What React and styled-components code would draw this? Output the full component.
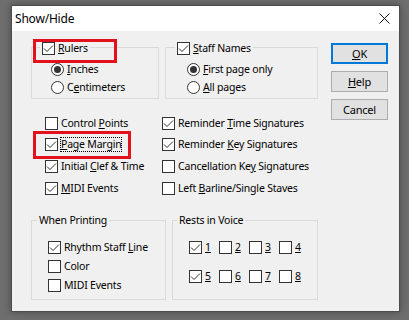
import React from 'react';
import styled, { createGlobalStyle } from 'styled-components';

const GlobalStyle = createGlobalStyle`
  html, body {
    margin: 0;
    padding: 0;
    background: #6e6e6e;
  }
  body {
    font-family: "Noto Sans", sans-serif;
    font-size: 10.5px;
    letter-spacing: -0.2px;
    color: #000;
  }
`;

const Screen = styled.div`
  width: 409px;
  height: 320px;
  box-sizing: border-box;
  padding: 5px 0 0 11px;
  overflow: hidden;
`;

const Dialog = styled.div`
  position: relative;
  width: 389px;
  height: 307px;
  box-sizing: border-box;
  border: 1px solid #4c4c4c;
  background: #f0f0f0;
  box-shadow: 0 0 7px rgba(0, 0, 0, 0.35);
  display: flex;
  flex-direction: column;
`;

const TitleBar = styled.div`
  height: 25px;
  flex: none;
  background: #fff;
  display: flex;
  align-items: center;
  justify-content: space-between;
  padding: 0 9px 0 3px;
  font-size: 12px;
`;

const Body = styled.div`
  display: flex;
  padding-left: 19px;
`;

const MainColumn = styled.div`
  width: 287px;
  padding-top: 16px;
`;

const ButtonColumn = styled.div`
  width: 57px;
  margin-left: 13px;
  padding-top: 12px;
  display: flex;
  flex-direction: column;
  gap: 7px;
`;

const Button = styled.button`
  width: 57px;
  height: 21px;
  box-sizing: border-box;
  padding: 0;
  background: #e1e1e1;
  border: ${(p) => (p.$default ? '2px solid #0078d7' : '1px solid #adadad')};
  font-family: inherit;
  font-size: 11px;
  letter-spacing: inherit;
  color: #000;
`;

const Row = styled.div`
  display: flex;
  gap: 6px;
  margin-top: ${(p) => p.$top || 0}px;
`;

const GroupBox = styled.div`
  width: ${(p) => p.$w}px;
  height: ${(p) => p.$h}px;
  box-sizing: border-box;
  border: 1px solid #dadada;
`;

const Legend = styled.div`
  display: flex;
  width: max-content;
  align-items: center;
  height: 13px;
  line-height: 13px;
  margin-top: ${(p) => (p.$text ? -7 : -6)}px;
  margin-left: ${(p) => p.$x}px;
  padding: 0 2px;
  background: #f0f0f0;
`;

const ItemList = styled.div`
  display: flex;
  flex-direction: column;
  gap: ${(p) => p.$gap}px;
  margin-top: ${(p) => p.$top}px;
  margin-left: ${(p) => p.$x}px;
`;

const Item = styled.div`
  display: flex;
  align-items: center;
  gap: 3px;
  height: 13px;
  line-height: 13px;
  white-space: nowrap;
`;

const Box = styled.span`
  width: 13px;
  height: 13px;
  flex: none;
  box-sizing: border-box;
  border: 1px solid #333;
  background: #fff;
  display: flex;
  align-items: center;
  justify-content: center;
`;

const Round = styled(Box)`
  border-radius: 50%;

  &::after {
    content: '';
    display: ${(p) => (p.$on ? 'block' : 'none')};
    width: 7px;
    height: 7px;
    border-radius: 50%;
    background: #333;
  }
`;

const Text = styled.span`
  outline: ${(p) => (p.$focus ? '1px dotted #000' : 'none')};
  outline-offset: 0;
`;

const Key = styled.u`
  text-underline-offset: 1px;
`;

const MiddleGrid = styled.div`
  display: grid;
  grid-template-columns: 117px 1fr;
  grid-template-rows: 21px 22px 22px 13px;
  grid-auto-flow: column;
  margin-top: 18px;
  padding-left: 14px;
`;

const RestGrid = styled.div`
  display: grid;
  grid-template-columns: repeat(4, 30px);
  row-gap: 16px;
  margin-top: 14px;
  margin-left: 16px;
`;

const Highlight = styled.div`
  position: absolute;
  left: ${(p) => p.$x}px;
  top: ${(p) => p.$y}px;
  width: ${(p) => p.$w}px;
  height: ${(p) => p.$h}px;
  box-sizing: border-box;
  border: 3px solid #e2111b;
  pointer-events: none;
`;

const CheckMark = () => (
  <svg width="11" height="11" viewBox="0 0 11 11">
    <polyline points="1,5.5 4,8.5 10,2.5" fill="none" stroke="#333" strokeWidth="1" />
  </svg>
);

const CloseIcon = () => (
  <svg width="11" height="11" viewBox="0 0 11 11">
    <path d="M0.5 0.5 L10.5 10.5 M10.5 0.5 L0.5 10.5" stroke="#111" strokeWidth="1" />
  </svg>
);

const Check = ({ on, focus, children }) => (
  <Item>
    <Box>{on && <CheckMark />}</Box>
    <Text $focus={focus}>{children}</Text>
  </Item>
);

const Radio = ({ on, children }) => (
  <Item>
    <Round $on={on} />
    <Text>{children}</Text>
  </Item>
);

const rests = [
  { n: 1, on: true },
  { n: 2 },
  { n: 3 },
  { n: 4 },
  { n: 5, on: true },
  { n: 6 },
  { n: 7 },
  { n: 8 },
];

export default function App() {
  return (
    <Screen>
      <GlobalStyle />
      <Dialog>
        <TitleBar>
          <span>Show/Hide</span>
          <CloseIcon />
        </TitleBar>
        <Body>
          <MainColumn>
            <Row>
              <GroupBox $w={128} $h={52}>
                <Legend $x={8}>
                  <Check on><Key>R</Key>ulers</Check>
                </Legend>
                <ItemList $top={8} $x={19} $gap={5}>
                  <Radio on><Key>I</Key>nches</Radio>
                  <Radio>C<Key>e</Key>ntimeters</Radio>
                </ItemList>
              </GroupBox>
              <GroupBox $w={153} $h={52}>
                <Legend $x={9}>
                  <Check on><Key>S</Key>taff Names</Check>
                </Legend>
                <ItemList $top={8} $x={21} $gap={5}>
                  <Radio on><Key>F</Key>irst page only</Radio>
                  <Radio><Key>A</Key>ll pages</Radio>
                </ItemList>
              </GroupBox>
            </Row>

            <MiddleGrid>
              <Check>Control <Key>P</Key>oints</Check>
              <Check on focus><Key>P</Key>age Margin</Check>
              <Check on>Initial <Key>C</Key>lef &amp; Time</Check>
              <Check on><Key>M</Key>IDI Events</Check>
              <Check on>Reminder <Key>T</Key>ime Signatures</Check>
              <Check on>Reminder <Key>K</Key>ey Signatures</Check>
              <Check>Cancellation Ke<Key>y</Key> Signatures</Check>
              <Check>Left <Key>B</Key>arline/Single Staves</Check>
            </MiddleGrid>

            <Row $top={25}>
              <GroupBox $w={135} $h={80}>
                <Legend $text $x={5}>When Printing</Legend>
                <ItemList $top={14} $x={16} $gap={6}>
                  <Check on>Rhythm Staff <Key>L</Key>ine</Check>
                  <Check>Color</Check>
                  <Check>MIDI Events</Check>
                </ItemList>
              </GroupBox>
              <GroupBox $w={146} $h={80}>
                <Legend $text $x={4}>Rests in Voice</Legend>
                <RestGrid>
                  {rests.map((r) => (
                    <Check key={r.n} on={r.on}><Key>{r.n}</Key></Check>
                  ))}
                </RestGrid>
              </GroupBox>
            </Row>
          </MainColumn>

          <ButtonColumn>
            <Button $default><Key>O</Key>K</Button>
            <Button><Key>H</Key>elp</Button>
            <Button>Cancel</Button>
          </ButtonColumn>
        </Body>
        <Highlight $x={21} $y={33} $w={84} $h={24} />
        <Highlight $x={21} $y={125} $w={98} $h={28} />
      </Dialog>
    </Screen>
  );
}
